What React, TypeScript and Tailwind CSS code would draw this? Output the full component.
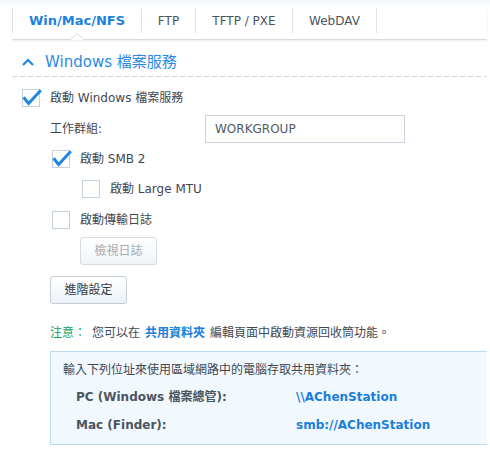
import type { ReactNode } from "react";

const FONT = { fontFamily: '"DejaVu Sans", "Noto Sans CJK TC", sans-serif' };

function Checkbox({ checked }: { checked?: boolean }) {
  return (
    <span className="relative block h-[18px] w-[18px] shrink-0 border border-[#c6d1dc] bg-white">
      {checked && (
        <svg
          viewBox="0 0 18 18"
          className="absolute -left-px -top-px h-[18px] w-[18px] overflow-visible"
          aria-hidden="true"
        >
          <path d="M1.6 8.2 L6.6 14.4 L18.8 1.2" fill="none" stroke="#1d86e3" strokeWidth="3" strokeLinejoin="miter" />
        </svg>
      )}
    </span>
  );
}

function CheckRow({ checked, indent, top, children }: { checked?: boolean; indent: string; top: string; children: ReactNode }) {
  return (
    <div className={`flex h-[18px] items-center gap-[10px] ${indent} ${top}`}>
      <Checkbox checked={checked} />
      <span className="text-[12px] text-[#3f4852]">{children}</span>
    </div>
  );
}

const tabs = [
  { label: "Win/Mac/NFS", w: "w-[129px]" },
  { label: "FTP", w: "w-[54px]" },
  { label: "TFTP / PXE", w: "w-[97px]" },
  { label: "WebDAV", w: "w-[85px]" },
];

export default function App() {
  return (
    <div className="relative h-[463px] w-[490px] overflow-hidden bg-white" style={FONT}>
      <div className="h-[8px] bg-gradient-to-b from-[#f2f5f9] to-white" />
      <div className="pl-3 pr-[3px]">
        {/* tab bar */}
        <div className="relative flex h-[32px] items-start border-b border-[#d3dae2] shadow-[0_1px_2px_rgba(0,0,0,0.08)]">
          {tabs.map((t, i) => (
            <div
              key={t.label}
              className={`flex h-[25px] items-center justify-center border-l border-[#dbe2e9] ${t.w} ${i === tabs.length - 1 ? "border-r" : ""}`}
            >
              <span className={i === 0 ? "text-[13px] font-bold text-[#1b82e0]" : "text-[12px] text-[#4a545e]"}>{t.label}</span>
            </div>
          ))}
          <svg viewBox="0 0 14 7" className="absolute bottom-[-1px] left-[58px] h-[7px] w-[14px]" aria-hidden="true">
            <path d="M0 6.5 L7 0.5 L14 6.5" fill="#fff" stroke="#d3dae2" strokeWidth="1" />
            <rect x="1" y="6" width="12" height="1" fill="#fff" />
          </svg>
        </div>

        {/* section header */}
        <div className="mt-[8px] flex h-[28px] items-center gap-[11px] pl-[10px]">
          <svg viewBox="0 0 12 8" className="h-[8px] w-[12px] shrink-0" aria-hidden="true">
            <path d="M1 7 L6 2 L11 7" fill="none" stroke="#1f86e2" strokeWidth="2.2" />
          </svg>
          <span className="text-[15px] text-[#2a8ae2]">Windows 檔案服務</span>
        </div>
        <div className="h-px bg-[linear-gradient(to_right,#c8d5e2_5px,transparent_5px)] bg-[length:8px_1px]" />

        <CheckRow checked indent="pl-[10px]" top="mt-[12px]">
          啟動 Windows 檔案服務
        </CheckRow>

        <div className="mt-[8px] flex h-[28px] items-center pl-[38px]">
          <span className="w-[155px] text-[12px] text-[#3f4852]">工作群組:</span>
          <div className="flex h-[28px] w-[200px] items-center border border-[#c8d3de] px-[9px] text-[12px] text-[#4f5a65]">
            WORKGROUP
          </div>
        </div>

        <CheckRow checked indent="pl-[40px]" top="mt-[7px]">
          啟動 SMB 2
        </CheckRow>
        <CheckRow indent="pl-[70px]" top="mt-[12px]">
          啟動 Large MTU
        </CheckRow>
        <CheckRow indent="pl-[40px]" top="mt-[13px]">
          啟動傳輸日誌
        </CheckRow>

        <button
          type="button"
          className="ml-[68px] mt-[8px] flex h-[28px] w-[77px] items-center justify-center rounded-[3px] border border-[#d3dbe3] bg-gradient-to-b from-white to-[#f0f4f8] text-[12px] text-[#a3abb3]"
        >
          檢視日誌
        </button>
        <button
          type="button"
          className="ml-[38px] mt-[11px] flex h-[28px] w-[77px] items-center justify-center rounded-[3px] border border-[#c3cdd7] bg-gradient-to-b from-white to-[#edf2f7] text-[12px] text-[#2f3842]"
        >
          進階設定
        </button>

        <p className="ml-[38px] mt-[21px] flex h-[16px] items-center text-[12px] text-[#3f4852]">
          <span className="text-[#15a05a]">注意：</span>
          <span className="ml-[6px]">您可以在</span>
          <span className="mx-[5px] font-bold text-[#1a7fdb]">共用資料夾</span>
          <span>編輯頁面中啟動資源回收筒功能。</span>
        </p>

        <div className="ml-[38px] mt-[10px] border border-r-0 border-[#b9dcf4] bg-[#f1f8fe] pb-[11px] pl-[12px] pt-[10px]">
          <p className="h-[16px] text-[12px] leading-[16px] text-[#3f4852]">輸入下列位址來使用區域網路中的電腦存取共用資料夾：</p>
          <div className="ml-[13px] mt-[11px] flex h-[16px] items-center text-[12px] font-bold">
            <span className="w-[220px] text-[#4b5560]">PC (Windows 檔案總管):</span>
            <span className="text-[#1a7fdb]">\\AChenStation</span>
          </div>
          <div className="ml-[13px] mt-[12px] flex h-[16px] items-center text-[12px] font-bold">
            <span className="w-[220px] text-[#4b5560]">Mac (Finder):</span>
            <span className="text-[#1a7fdb]">smb://AChenStation</span>
          </div>
        </div>
      </div>
    </div>
  );
}
